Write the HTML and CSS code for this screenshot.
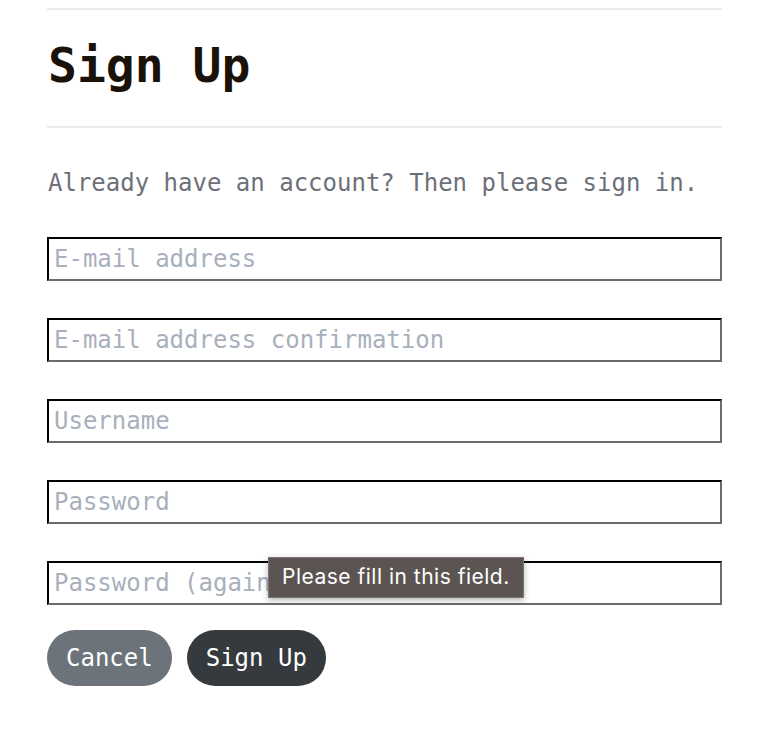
FILE: index.html
```html
<!DOCTYPE html>
<html lang="en">
<head>
<meta charset="utf-8">
<title>Sign Up</title>
<link rel="stylesheet" href="styles.css">
</head>
<body>
<main class="page">
  <header class="title-block">
    <h1 class="title">Sign Up</h1>
  </header>
  <p class="lead">Already have an account? Then please sign in.</p>
  <form class="form">
    <input class="field" type="email" placeholder="E-mail address">
    <input class="field" type="email" placeholder="E-mail address confirmation">
    <input class="field" type="text" placeholder="Username">
    <input class="field" type="password" placeholder="Password">
    <div class="field-wrap">
      <input class="field" type="password" placeholder="Password (again)">
      <div class="tooltip">Please fill in this field.</div>
    </div>
    <div class="actions">
      <button type="button" class="btn btn-cancel">Cancel</button>
      <button type="submit" class="btn btn-primary">Sign Up</button>
    </div>
  </form>
</main>
</body>
</html>
```
FILE: styles.css
```css
html, body {
  margin: 0;
  padding: 0;
  background: #ffffff;
}
body {
  font-family: "DejaVu Sans Mono", "Liberation Mono", monospace;
}
.page {
  width: 675px;
  margin-left: 47px;
}
.title-block {
  margin-top: 8px;
  border-top: 2px solid #ebebeb;
  border-bottom: 2px solid #ebebeb;
  padding: 25px 0 31px 1px;
}
.title {
  margin: 0;
  font-size: 48px;
  line-height: 60px;
  font-weight: bold;
  color: #1a1209;
}
.lead {
  margin: 39px 0 0 1px;
  font-size: 24px;
  line-height: 32px;
  color: #6c7077;
}
.form {
  display: flex;
  flex-direction: column;
  margin-top: 38px;
  gap: 37px;
}
.field-wrap {
  position: relative;
}
.field {
  box-sizing: border-box;
  display: block;
  width: 675px;
  height: 44px;
  margin: 0;
  padding: 0 5px;
  border: 2px solid;
  border-color: #000000 #6b6b6b #6b6b6b #000000;
  font-family: "DejaVu Sans Mono", "Liberation Mono", monospace;
  font-size: 24px;
  background: #fff;
  color: #222;
}
.field::placeholder {
  color: #a7b0bc;
}
.tooltip {
  position: absolute;
  left: 221px;
  top: -4px;
  padding: 6px 13px 8px;
  background: #5b5452;
  color: #ffffff;
  font-family: "Inter", "Roboto", sans-serif;
  font-size: 21px;
  letter-spacing: 0.5px;
  line-height: 25px;
  border: 1px solid #7c7573;
  box-shadow: 0 2px 6px rgba(0,0,0,0.3);
  white-space: nowrap;
}
.actions {
  display: flex;
  gap: 15px;
  margin-top: -12px;
}
.btn {
  height: 56px;
  border: none;
  border-radius: 28px;
  padding: 0 19px;
  font-family: "DejaVu Sans Mono", "Liberation Mono", monospace;
  font-size: 24px;
  color: #ffffff;
}
.btn-cancel {
  background: #6c737b;
}
.btn-primary {
  background: #353a3e;
}
```
